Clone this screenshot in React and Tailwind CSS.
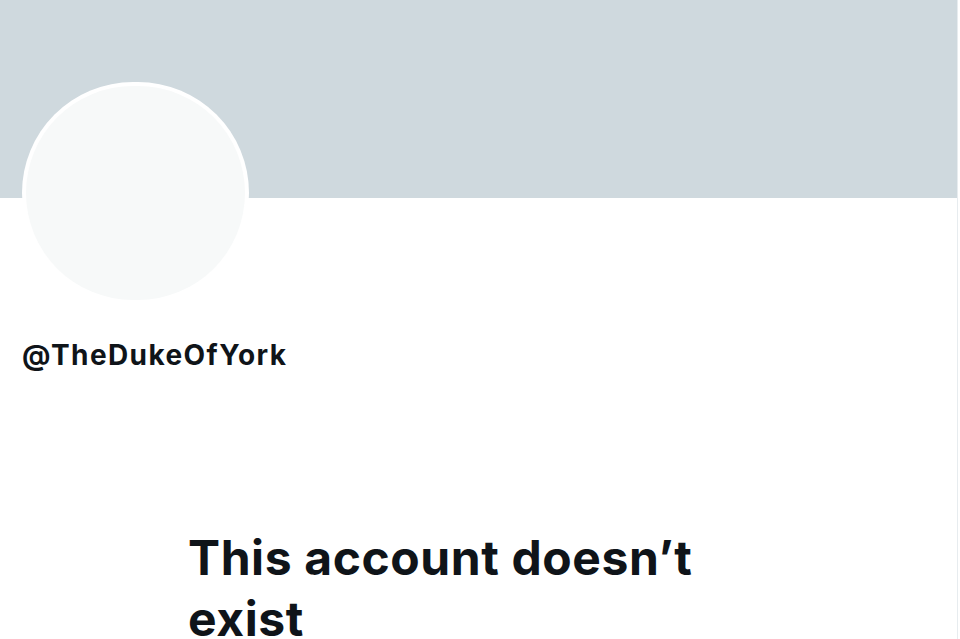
import React from 'react';

export default function App() {
    return (
        <div className="w-[960px] h-[639px] overflow-hidden bg-white flex" style={{ fontFamily: 'Inter, "Liberation Sans", Arial, sans-serif' }}>
            <div className="w-[958px] border-r border-[#e7ecef] flex flex-col">
                <div className="h-[198px] bg-[#cfd9de] shrink-0" />
                <div className="relative px-[22px]">
                    <div className="absolute left-[22px] -top-[116px] w-[227px] h-[222px] rounded-full bg-white p-[4px]">
                        <div className="w-full h-full rounded-full bg-[#f7f9f9]" />
                    </div>
                    <div className="pt-[141px] text-[28px] font-bold text-[#0f1419] leading-8 tracking-[1.4px]">
                        @TheDukeOfYork
                    </div>
                    <div className="pl-[166px] pt-[156px]">
                        <h1 className="text-[48px] font-bold text-[#0f1419] leading-[61px] w-[560px] tracking-[0.6px]">
                            This account doesn’t exist
                        </h1>
                    </div>
                </div>
            </div>
        </div>
    );
}
